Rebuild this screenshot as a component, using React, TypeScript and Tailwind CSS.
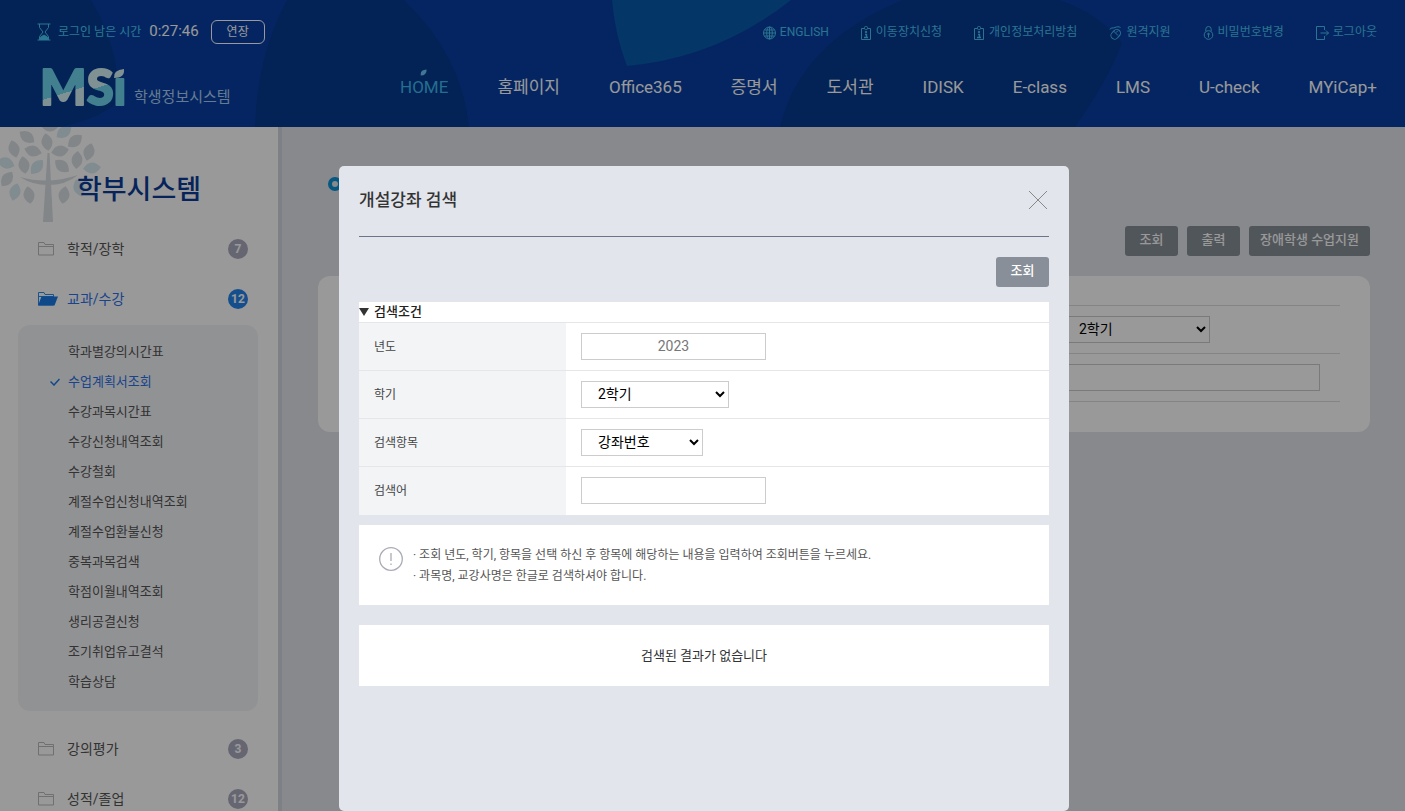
import type { ReactNode } from "react";
import { clsx } from "clsx";

type Leaf = { x: number; y: number; r: number; pale?: boolean };

const leaves: Leaf[] = [
  { x: 14, y: 24, r: -15 },
  { x: 27, y: 12, r: -55 },
  { x: 50, y: 1, r: 90 },
  { x: 64, y: 7, r: 55, pale: true },
  { x: 47, y: 17, r: -10 },
  { x: 33, y: 26, r: -75 },
  { x: 60, y: 26, r: 80 },
  { x: 75, y: 16, r: 50 },
  { x: 89, y: 27, r: 15 },
  { x: 77, y: 35, r: 5 },
  { x: 92, y: 43, r: 85, pale: true },
  { x: 6, y: 38, r: -70, pale: true },
  { x: 24, y: 40, r: -10 },
  { x: 37, y: 42, r: 40, pale: true },
  { x: 62, y: 41, r: -50 },
  { x: 7, y: 54, r: 35 },
  { x: 15, y: 67, r: 15, pale: true },
  { x: 29, y: 70, r: -10 },
  { x: 64, y: 70, r: 10 },
  { x: 79, y: 63, r: -20, pale: true },
];

const topLinks = [
  { label: "ENGLISH", icon: "globe" },
  { label: "이동장치신청", icon: "badge" },
  { label: "개인정보처리방침", icon: "badge" },
  { label: "원격지원", icon: "mouse" },
  { label: "비밀번호변경", icon: "lock" },
  { label: "로그아웃", icon: "exit" },
];

const navItems = ["HOME", "홈페이지", "Office365", "증명서", "도서관", "IDISK", "E-class", "LMS", "U-check", "MYiCap+"];

const subMenu = [
  "학과별강의시간표",
  "수업계획서조회",
  "수강과목시간표",
  "수강신청내역조회",
  "수강철회",
  "계절수업신청내역조회",
  "계절수업환불신청",
  "중복과목검색",
  "학점이월내역조회",
  "생리공결신청",
  "조기취업유고결석",
  "학습상담",
];

function TopIcon({ name }: { name: string }) {
  return (
    <svg
      className="mt-0.5"
      width={name === "badge" || name === "lock" ? 11 : 13}
      height="14"
      viewBox={name === "badge" || name === "lock" ? "1 0 11 14" : "0 0 13 14"}
      fill="none"
      stroke="currentColor"
      aria-hidden="true"
    >
      {name === "globe" && (
        <>
          <circle cx="6.5" cy="7" r="6" />
          <ellipse cx="6.5" cy="7" rx="2.8" ry="6" />
          <path d="M6.5 1v12M.5 7h12M1.5 4h10M1.5 10h10" />
        </>
      )}
      {name === "badge" && (
        <>
          <path d="M4.5 2.5h-3v11h9v-11h-3" />
          <rect x="4.5" y=".5" width="3" height="3" rx="1" />
          <circle cx="6" cy="6" r=".8" fill="currentColor" />
          <path d="M5 8.5h1.500v3M4 11.5h4" strokeWidth="1.4" />
        </>
      )}
      {name === "mouse" && (
        <>
          <rect x="3" y="3" width="7.4" height="10.6" rx="3.7" transform="rotate(42 6.7 8.3)" />
          <path d="M4.5 5l4.500 4.500M7.2 6.5L9 4.500M1 3.500C1.500 1.200 4 2.500 6 1.500S10 .5 11.500 1.500" />
        </>
      )}
      {name === "lock" && (
        <>
          <circle cx="6.500" cy="9" r="4.300" />
          <path d="M3.800 5.500V3.200a2.700 2.700 0 015.400 0v2.300M6.500 8v3.500" />
          <circle cx="6.500" cy="8" r=".8" fill="currentColor" />
        </>
      )}
      {name === "exit" && <path d="M8.500 4V.5h-8v13h8V10M4.500 7h8M10 4.500L12.500 7 10 9.500" />}
    </svg>
  );
}

function HeaderShapes() {
  return (
    <svg
      className="absolute inset-0 h-full w-full"
      viewBox="0 0 1405 127"
      preserveAspectRatio="xMinYMin slice"
      aria-hidden="true"
    >
      <path d="M0 0H91Q112 36 117 72Q119 90 116 104Q95 120 60 127H0Z" fill="#053990" />
      <path d="M287 0Q257 55 255 127H469Q462 55 404 0Z" fill="#053990" />
      <path d="M612 0Q615 35 627 66Q718 58 791 0Z" fill="#075aad" />
      <path d="M903 0Q800 42 780 127H1075Q1107 82 1122 43Q1100 14 1059 0Z" fill="#053990" />
    </svg>
  );
}

function Logo() {
  return (
    <a href="#home" className="flex items-center gap-2 text-[15px] text-[#a9cdf2]">
      <svg width="86" height="64" viewBox="0 -12 86 64" role="img" aria-label="MSi">
        <defs>
          <linearGradient id="logoTone" gradientUnits="userSpaceOnUse" x1="14" y1="0" x2="26" y2="38">
            <stop offset=".68" stopColor="#6fd6ef" />
            <stop offset=".68" stopColor="#d6f2f5" />
          </linearGradient>
          <linearGradient id="logoToneS" gradientUnits="userSpaceOnUse" x1="50" y1="0" x2="62" y2="40">
            <stop offset=".5" stopColor="#d6f2f5" />
            <stop offset=".5" stopColor="#6fd6ef" />
          </linearGradient>
        </defs>
        <g fontFamily="Lato" fontWeight="900" fontSize="49" strokeWidth="2" strokeLinejoin="round">
          <text y="37">
            <tspan fill="url(#logoTone)" stroke="url(#logoTone)">M</tspan>
            <tspan fill="url(#logoToneS)" stroke="url(#logoToneS)">S</tspan>
            <tspan fill="#6fd6ef" stroke="#6fd6ef">ı</tspan>
          </text>
        </g>
        <path d="M74 10Q73 2 84 1Q85 10 74 10Z" fill="#d6f2f5" />
      </svg>
      <span className="mt-[18px]">학생정보시스템</span>
    </a>
  );
}

function Header() {
  return (
    <header className="relative h-[127px] shrink-0 bg-[#083fa3] px-7 text-white">
      <HeaderShapes />
      <div className="relative flex h-16 items-center justify-between">
        <div className="flex items-center pl-2 text-xs text-[#48c8f5]">
          <svg width="16" height="18" viewBox="0 0 16 18" fill="none" stroke="currentColor" aria-hidden="true">
            <path d="M1.500 1h13M1.500 17h13M3.500 1v3.500L7 9l-3.500 4.500V17M12.500 1v3.500L9 9l3.500 4.500V17" />
            <path d="M4 16.500v-2L8 12l4 2.500v2z" fill="currentColor" />
          </svg>
          <span className="ml-1.5">로그인 남은 시간</span>
          <span className="ml-2 text-[15px] text-white">0:27:46</span>
          <button type="button" className="ml-3 h-6 w-[54px] rounded-md border border-white text-white">
            연장
          </button>
        </div>
        <ul className="flex items-center gap-8 text-xs text-[#48c0f0]">
          {topLinks.map((link) => (
            <li key={link.label}>
              <a href="#top" className="flex items-center gap-1">
                <TopIcon name={link.icon} />
                {link.label}
              </a>
            </li>
          ))}
        </ul>
      </div>
      <div className="relative flex h-12 items-center justify-between">
        <div className="pl-3">
          <Logo />
        </div>
        <nav>
          <ul className="flex gap-[49px] text-[17px]">
            {navItems.map((item, i) => (
              <li key={item} className={clsx("relative", i === 0 && "text-[#3cb9ec]")}>
                <a href="#nav">{item}</a>
                {i === 0 && (
                  <svg className="absolute -top-1.5 left-5" width="7" height="7" viewBox="0 0 8 8" aria-hidden="true">
                    <path d="M1 7.500Q-.5 1 7.500.5Q8 7 1 7.500Z" fill="#6fc6f5" />
                  </svg>
                )}
              </li>
            ))}
          </ul>
        </nav>
      </div>
    </header>
  );
}

function MenuRow({ label, count, open }: { label: string; count: number; open?: boolean }) {
  return (
    <a
      href="#menu"
      className={clsx("flex h-[50px] items-center pr-[30px] pl-[37px] text-sm", open ? "text-[#2b70ea]" : "text-[#555]")}
    >
      <svg width="21" height="14" viewBox="0 0 21 14" fill="none" aria-hidden="true">
        <path d="M1.500 13V.5H7L8 2.500h8.500V13ZM1.500 4.500h15" stroke={open ? "#2b8cea" : "#bbb"} />
        {open && <path d="M4.500 4.500H21L17.500 13.500H1Z" fill="#1a7ae6" />}
      </svg>
      <span className="ml-[9px] flex-1">{label}</span>
      <span
        className={clsx(
          "flex size-5 items-center justify-center rounded-full text-xs font-bold text-white",
          open ? "bg-[#2382ea]" : "bg-[#aaaabe]",
        )}
      >
        {count}
      </span>
    </a>
  );
}

function Sidebar() {
  return (
    <aside className="relative w-[278px] shrink-0 bg-white">
      <svg className="absolute top-0 left-0" width="104" height="98" viewBox="0 2 104 98" aria-hidden="true">
        <path d="M47.500 28h2l3.500 69h-10Z" fill="#dae0e4" />
        <path d="M20 52Q48 60 78 50Q66 60 48 60Q32 60 20 52Z" fill="#dae0e4" />
        {leaves.map((leaf) => (
          <path
            key={`${leaf.x}-${leaf.y}`}
            d="M0 -9Q11 0 0 9Q-11 0 0 -9Z"
            fill={leaf.pale ? "#d8e9f1" : "#dae0e4"}
            transform={`translate(${leaf.x} ${leaf.y}) rotate(${leaf.r})`}
          />
        ))}
      </svg>
      <h1 className="relative pt-[45px] pb-4 text-center text-[27px] leading-9 font-medium text-[#0b3c98]">
        학부시스템
      </h1>
      <nav>
        <MenuRow label="학적/장학" count={7} />
        <MenuRow label="교과/수강" count={12} open />
        <ul className="mx-[18px] mt-px mb-[13px] w-60 rounded-xl bg-[#f2f4f6] pt-3 pb-3.5 text-[13px] text-[#555]">
          {subMenu.map((item, i) => (
            <li key={item}>
              <a href="#sub" className={clsx("flex h-[30px] items-center pl-8", i === 1 && "text-[#2b70ea]")}>
                <svg width="10" height="8" viewBox="0 0 10 8" fill="none" aria-hidden="true">
                  {i === 1 && <path d="M.5 3.500L4 7l5.500-6" stroke="#1a7ae6" strokeWidth="1.500" />}
                </svg>
                <span className="ml-2">{item}</span>
              </a>
            </li>
          ))}
        </ul>
        <MenuRow label="강의평가" count={3} />
        <MenuRow label="성적/졸업" count={12} />
      </nav>
    </aside>
  );
}

function GrayButton({ children }: { children: ReactNode }) {
  return (
    <button
      type="button"
      className="h-[30px] min-w-[53px] rounded-[3px] bg-[#888f98] px-[11px] pb-0.5 text-[13px] font-medium text-white"
    >
      {children}
    </button>
  );
}

const fieldClass = "block h-[27px] border border-[#ccc] bg-white pb-0.5 text-sm";

function Content() {
  return (
    <main className="flex-1 border-l-4 border-[#d0d5dc] bg-[#e2e4e9] pt-[49px] pr-[35px] pl-9">
      <div className="flex h-4 items-center pl-2.5">
        <span className="size-3.5 rounded-full border-4 border-[#0a93d6]" />
      </div>
      <div className="mt-[34px] flex justify-end gap-[9px]">
        <GrayButton>조회</GrayButton>
        <GrayButton>출력</GrayButton>
        <GrayButton>장애학생 수업지원</GrayButton>
      </div>
      <div className="mt-5 h-[156px] rounded-xl bg-white px-[30px] pt-[29px]">
        <div className="flex h-12 items-center justify-end border-t border-[#ddd] pr-[130px]">
          <select aria-label="학기" className={clsx(fieldClass, "w-[148px] pl-3")}>
            <option>2학기</option>
          </select>
        </div>
        <div className="flex h-[49px] items-center border-y border-[#ddd] pr-5 pl-[220px]">
          <input type="text" aria-label="교과목" className={clsx(fieldClass, "w-full")} />
        </div>
      </div>
    </main>
  );
}

function FormRow({ id, label, children }: { id: string; label: string; children: ReactNode }) {
  return (
    <tr className="h-12 border-t border-[#e4e6e9]">
      <th scope="row" className="w-[30%] bg-[#f2f4f6] pl-[15px] text-left text-xs font-normal text-[#444]">
        <label htmlFor={id}>{label}</label>
      </th>
      <td className="pl-[15px]">{children}</td>
    </tr>
  );
}

function SearchDialog() {
  return (
    <div
      role="dialog"
      aria-modal="true"
      aria-labelledby="dialog-title"
      className="w-[730px] rounded-[5px] bg-[#e2e5ec] px-5"
    >
      <div className="flex h-[71px] items-center justify-between border-b border-[#6b7488]">
        <h2 id="dialog-title" className="text-[17px] font-medium text-[#333]">
          개설강좌 검색
        </h2>
        <button type="button" aria-label="닫기" className="pr-0.5 pb-0.5">
          <svg width="18" height="18" viewBox="0 0 18 18" fill="none" stroke="#888" aria-hidden="true">
            <path d="M0 0l18 18M18 0L0 18" />
          </svg>
        </button>
      </div>
      <div className="mt-5 mb-[15px] flex justify-end">
        <GrayButton>조회</GrayButton>
      </div>

      <details open className="bg-white">
        <summary className="flex h-5 cursor-pointer list-none items-center gap-[5px] text-[13px] font-medium text-[#222]">
          <svg width="10" height="8" viewBox="0 0 10 8" aria-hidden="true">
            <path d="M0 0h10L5 8Z" fill="#333" />
          </svg>
          검색조건
        </summary>
        <table className="w-full border-collapse">
          <tbody>
            <FormRow id="year" label="년도">
              <input
                id="year"
                type="text"
                defaultValue="2023"
                className={clsx(fieldClass, "w-[185px] text-center text-[#777]")}
              />
            </FormRow>
            <FormRow id="term" label="학기">
              <select id="term" className={clsx(fieldClass, "w-[148px] pl-3")}>
                <option>2학기</option>
              </select>
            </FormRow>
            <FormRow id="field" label="검색항목">
              <select id="field" className={clsx(fieldClass, "w-[122px] pl-3")}>
                <option>강좌번호</option>
              </select>
            </FormRow>
            <FormRow id="keyword" label="검색어">
              <input id="keyword" type="text" className={clsx(fieldClass, "w-[185px]")} />
            </FormRow>
          </tbody>
        </table>
      </details>

      <div className="mt-2.5 flex h-20 gap-2.5 bg-white px-5 pt-5 text-xs leading-[21px] text-[#555]">
        <svg className="mt-0.5" width="24" height="24" viewBox="0 0 24 24" fill="none" stroke="#aaacb5" aria-hidden="true">
          <circle cx="12" cy="12" r="11.300" strokeWidth="1.300" />
          <path d="M12 6v8M12 16.500v1.500" strokeWidth="1.300" />
        </svg>
        <ul>
          <li>· 조회 년도, 학기, 항목을 선택 하신 후 항목에 해당하는 내용을 입력하여 조회버튼을 누르세요.</li>
          <li>· 과목명, 교강사명은 한글로 검색하셔야 합니다.</li>
        </ul>
      </div>

      <p className="mt-5 bg-white py-5 text-center text-[13px] leading-[21px] text-[#333]">검색된 결과가 없습니다</p>
    </div>
  );
}

export default function App() {
  return (
    <div className="flex h-screen flex-col overflow-hidden font-['Roboto','Noto_Sans_CJK_KR',sans-serif]">
      <Header />
      <div className="flex min-h-0 flex-1">
        <Sidebar />
        <Content />
      </div>
      <div className="fixed inset-0 flex justify-center bg-black/40 pt-[166px] pl-[3px]">
        <SearchDialog />
      </div>
    </div>
  );
}
